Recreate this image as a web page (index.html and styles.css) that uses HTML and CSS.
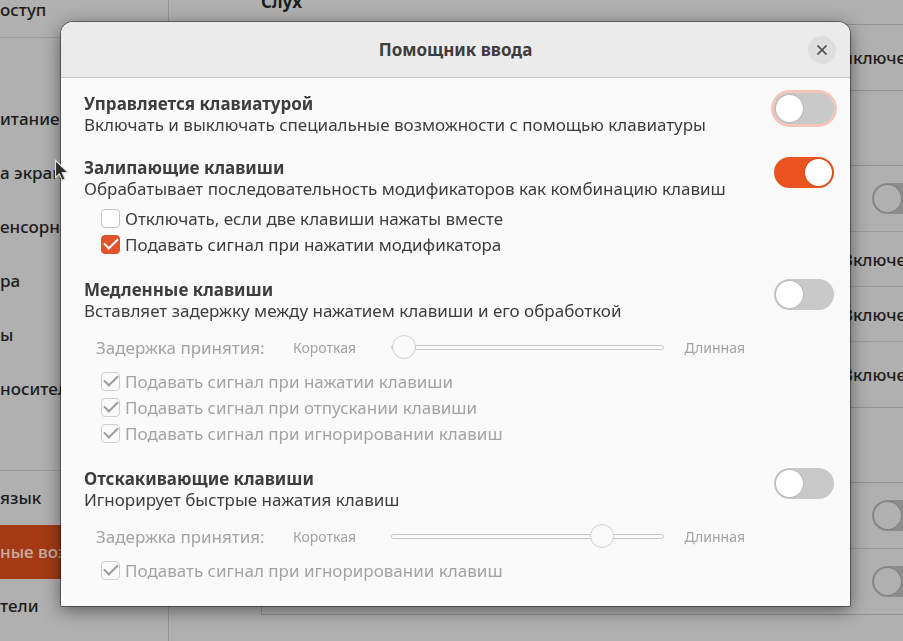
FILE: index.html
```html
<!DOCTYPE html>
<html lang="ru">
<head>
<meta charset="UTF-8">
<meta name="viewport" content="width=device-width, initial-scale=1.0">
<title>Помощник ввода</title>
<link rel="stylesheet" href="styles.css">
</head>
<body>

<div class="settings">
    <nav class="sidebar">
        <a href="#">оступ</a>
        <a href="#" class="separated"></a>
        <a href="#">итание</a>
        <a href="#">а экран</a>
        <a href="#">енсорна</a>
        <a href="#">ра</a>
        <a href="#">ы</a>
        <a href="#">носител</a>
        <a href="#"></a>
        <a href="#" class="separated">язык</a>
        <a href="#" class="active">ные воз</a>
        <a href="#">тели</a>
    </nav>

    <main class="panel">
        <h2>Слух</h2>
        <div class="list">
            <div class="item tall value">ыключе</div>
        </div>
        <div class="list">
            <div class="item tall"><input type="checkbox" role="switch" class="switch" aria-label="Экранная клавиатура"></div>
            <div class="item value">Включе</div>
            <div class="item value">Включе</div>
            <div class="item tall value">Включе</div>
        </div>
        <div class="list">
            <div class="item tall"><input type="checkbox" role="switch" class="switch" aria-label="Кнопки мыши"></div>
            <div class="item tall"><input type="checkbox" role="switch" class="switch" aria-label="Показать указатель"></div>
        </div>
    </main>
</div>

<div class="overlay">
    <div class="dialog" role="dialog" aria-labelledby="title">
        <header class="dialog-header">
            <h1 id="title">Помощник ввода</h1>
            <button type="button" class="close" aria-label="Закрыть">
                <svg width="12" height="12" viewBox="0 0 12 12"><path d="M1.5 1.5l9 9M10.5 1.5l-9 9" stroke="#4a4a4a" stroke-width="1.7" fill="none"/></svg>
            </button>
        </header>

        <div class="dialog-body">
            <section class="group">
                <label class="text" for="byKeyboard"><strong>Управляется клавиатурой</strong><span>Включать и выключать специальные возможности с помощью клавиатуры</span></label>
                <input type="checkbox" role="switch" class="switch focused" id="byKeyboard">
            </section>

            <section class="group">
                <label class="text" for="sticky"><strong>Залипающие клавиши</strong><span>Обрабатывает последовательность модификаторов как комбинацию клавиш</span></label>
                <input type="checkbox" role="switch" class="switch" id="sticky" checked>
                <div class="checks">
                    <label class="check"><input type="checkbox">Отключать, если две клавиши нажаты вместе</label>
                    <label class="check"><input type="checkbox" checked>Подавать сигнал при нажатии модификатора</label>
                </div>
            </section>

            <section class="group">
                <label class="text" for="slow"><strong>Медленные клавиши</strong><span>Вставляет задержку между нажатием клавиши и его обработкой</span></label>
                <input type="checkbox" role="switch" class="switch" id="slow">
                <div class="delay">
                    <label for="slowDelay">Задержка принятия:</label>
                    <small>Короткая</small>
                    <input type="range" id="slowDelay" min="0" max="100" value="0" disabled>
                    <small>Длинная</small>
                </div>
                <div class="checks">
                    <label class="check off"><input type="checkbox" checked disabled>Подавать сигнал при нажатии клавиши</label>
                    <label class="check off"><input type="checkbox" checked disabled>Подавать сигнал при отпускании клавиши</label>
                    <label class="check off"><input type="checkbox" checked disabled>Подавать сигнал при игнорировании клавиш</label>
                </div>
            </section>

            <section class="group">
                <label class="text" for="bounce"><strong>Отскакивающие клавиши</strong><span>Игнорирует быстрые нажатия клавиш</span></label>
                <input type="checkbox" role="switch" class="switch" id="bounce">
                <div class="delay">
                    <label for="bounceDelay">Задержка принятия:</label>
                    <small>Короткая</small>
                    <input type="range" id="bounceDelay" min="0" max="100" value="80" disabled>
                    <small>Длинная</small>
                </div>
                <div class="checks">
                    <label class="check off"><input type="checkbox" checked disabled>Подавать сигнал при игнорировании клавиш</label>
                </div>
            </section>
        </div>
    </div>
</div>

<svg class="cursor" width="16" height="24" viewBox="0 0 16 24">
    <path d="M1.5 1.5v17l3.8-3.6 2.8 6.4 3-1.3-2.8-6.2 5.6-.4z" fill="#2b2b2b" stroke="#e0e0e0" stroke-width="1.2"/>
</svg>

</body>
</html>
```
FILE: styles.css
```css
* {
  box-sizing: border-box;
}
body {
  margin: 0;
  overflow: hidden;
  background: #b0b0b0;
  color: #3d3d3d;
  font-family: "Noto Sans", "Open Sans", sans-serif;
  font-size: 17px;
  line-height: 21px;
}

/* Settings window behind the dialog */
.settings {
  display: flex;
  height: 100vh;
  margin-right: -42px;
  overflow: hidden;
  color: #1c1c1c;
  font-weight: 500;
}
.sidebar {
  flex: 0 0 169px;
  margin-top: -17px;
  border-right: 1px solid #959595;
}
.sidebar a {
  display: flex;
  align-items: center;
  height: 54px;
  padding-bottom: 2px;
  color: inherit;
  text-decoration: none;
  white-space: nowrap;
}
.sidebar .separated {
  height: 55px;
  border-top: 1px solid #9c9c9c;
}
.sidebar .active {
  background: #a33a15;
  color: #c9b0a6;
}
.panel {
  flex: 1;
  margin-left: 92px;
  margin-top: -9px;
}
.panel h2 {
  margin: 0 0 12px;
  font-size: 17px;
  line-height: 21px;
}
.list {
  margin-bottom: 74px;
  border: 1px solid #929292;
}
.item {
  display: flex;
  align-items: center;
  justify-content: flex-end;
  height: 55px;
  padding-right: 12px;
}
.item.value {
  padding-right: 38px;
}
.item.tall {
  height: 66px;
}
.item.tall:first-child {
  height: 65px;
}
.item + .item {
  border-top: 1px solid #9c9c9c;
}
.item .switch {
  border-color: #8c8c8c;
  background: #8c8c8c;
}
.item .switch::before {
  background: #b0b0b0;
}

/* Dialog */
.overlay {
  position: fixed;
  inset: 0;
  padding: 22px 53px 0 61px;
}
.dialog {
  border-radius: 12px 12px 1px 1px;
  background: #fafafa;
  box-shadow: 0 0 0 1px rgba(0, 0, 0, .4), 0 4px 18px rgba(0, 0, 0, .5);
}
.dialog-header {
  display: grid;
  grid-template-columns: 28px 1fr 28px;
  align-items: center;
  height: 56px;
  padding: 0 14px;
  border-bottom: 1px solid #c9c9c9;
  border-radius: 12px 12px 0 0;
  background: #ebebeb;
}
.dialog-header h1 {
  grid-column: 2;
  margin: 0;
  font-size: 17px;
  text-align: center;
}
.close {
  display: flex;
  align-items: center;
  justify-content: center;
  width: 28px;
  height: 28px;
  padding: 0;
  border: none;
  border-radius: 50%;
  background: #dedede;
}
.dialog-body {
  display: grid;
  gap: 22px;
  padding: 15px 16px 23px 23px;
}
.group {
  display: grid;
  grid-template-columns: 1fr 60px;
  column-gap: 29px;
}
.text strong,
.text span {
  display: block;
  white-space: nowrap;
}

/* Switches */
.switch {
  appearance: none;
  width: 60px;
  height: 31px;
  margin: 0;
  border: 2px solid #c9c9c9;
  border-radius: 16px;
  background: #c9c9c9;
}
.switch::before {
  content: "";
  display: block;
  width: 27px;
  height: 27px;
  border-radius: 50%;
  background: #fff;
  box-shadow: 0 0 1px 1px rgba(0, 0, 0, .08);
}
.switch:checked {
  border-color: #e95420;
  background: #e95420;
}
.switch:checked::before {
  margin-left: auto;
}
.switch.focused {
  box-shadow: 0 0 0 3px #f3c6ba;
}

/* Tick boxes */
.checks {
  grid-column: 1;
  padding: 6px 0 0 17px;
}
.delay + .checks {
  padding-top: 8px;
}
.check {
  display: flex;
  align-items: center;
  gap: 5px;
  height: 26px;
  white-space: nowrap;
}
.check input {
  appearance: none;
  display: flex;
  align-items: center;
  justify-content: center;
  width: 19px;
  height: 19px;
  margin: 0;
  border: 1px solid #c6c2c0;
  border-radius: 4px;
  background: #fff;
}
.check input:checked::before {
  content: "";
  width: 12px;
  height: 6px;
  margin-bottom: 4px;
  border: solid #fff;
  border-width: 0 0 2px 2px;
  transform: rotate(-45deg);
}
.check input:checked {
  border-color: #d9512a;
  background: #e0532b;
}
.check.off {
  color: #a3a3a3;
}
.check.off input {
  border-color: #cfcfcf;
  background: #fafafa;
}
.check.off input::before {
  border-color: #9c9c9c;
}

/* Sliders */
.delay {
  grid-column: 1;
  display: grid;
  grid-template-columns: 197px 98px 1fr 81px;
  align-items: center;
  height: 26px;
  margin-top: 13px;
  padding-left: 12px;
  color: #a3a3a3;
}
.delay small {
  font-size: 14px;
}
.delay small:last-child {
  text-align: right;
}
.delay input {
  appearance: none;
  width: 100%;
  height: 24px;
  margin: 0;
  background: none;
}
.delay input::-webkit-slider-runnable-track {
  height: 5px;
  border: 1px solid #c6c6c6;
  border-radius: 3px;
  background: #fafafa;
}
.delay input::-webkit-slider-thumb {
  appearance: none;
  width: 24px;
  height: 24px;
  margin-top: -11px;
  border: 1px solid #cfcfcf;
  border-radius: 50%;
  background: #fafafa;
}

.cursor {
  position: fixed;
  left: 54px;
  top: 159px;
}
```
